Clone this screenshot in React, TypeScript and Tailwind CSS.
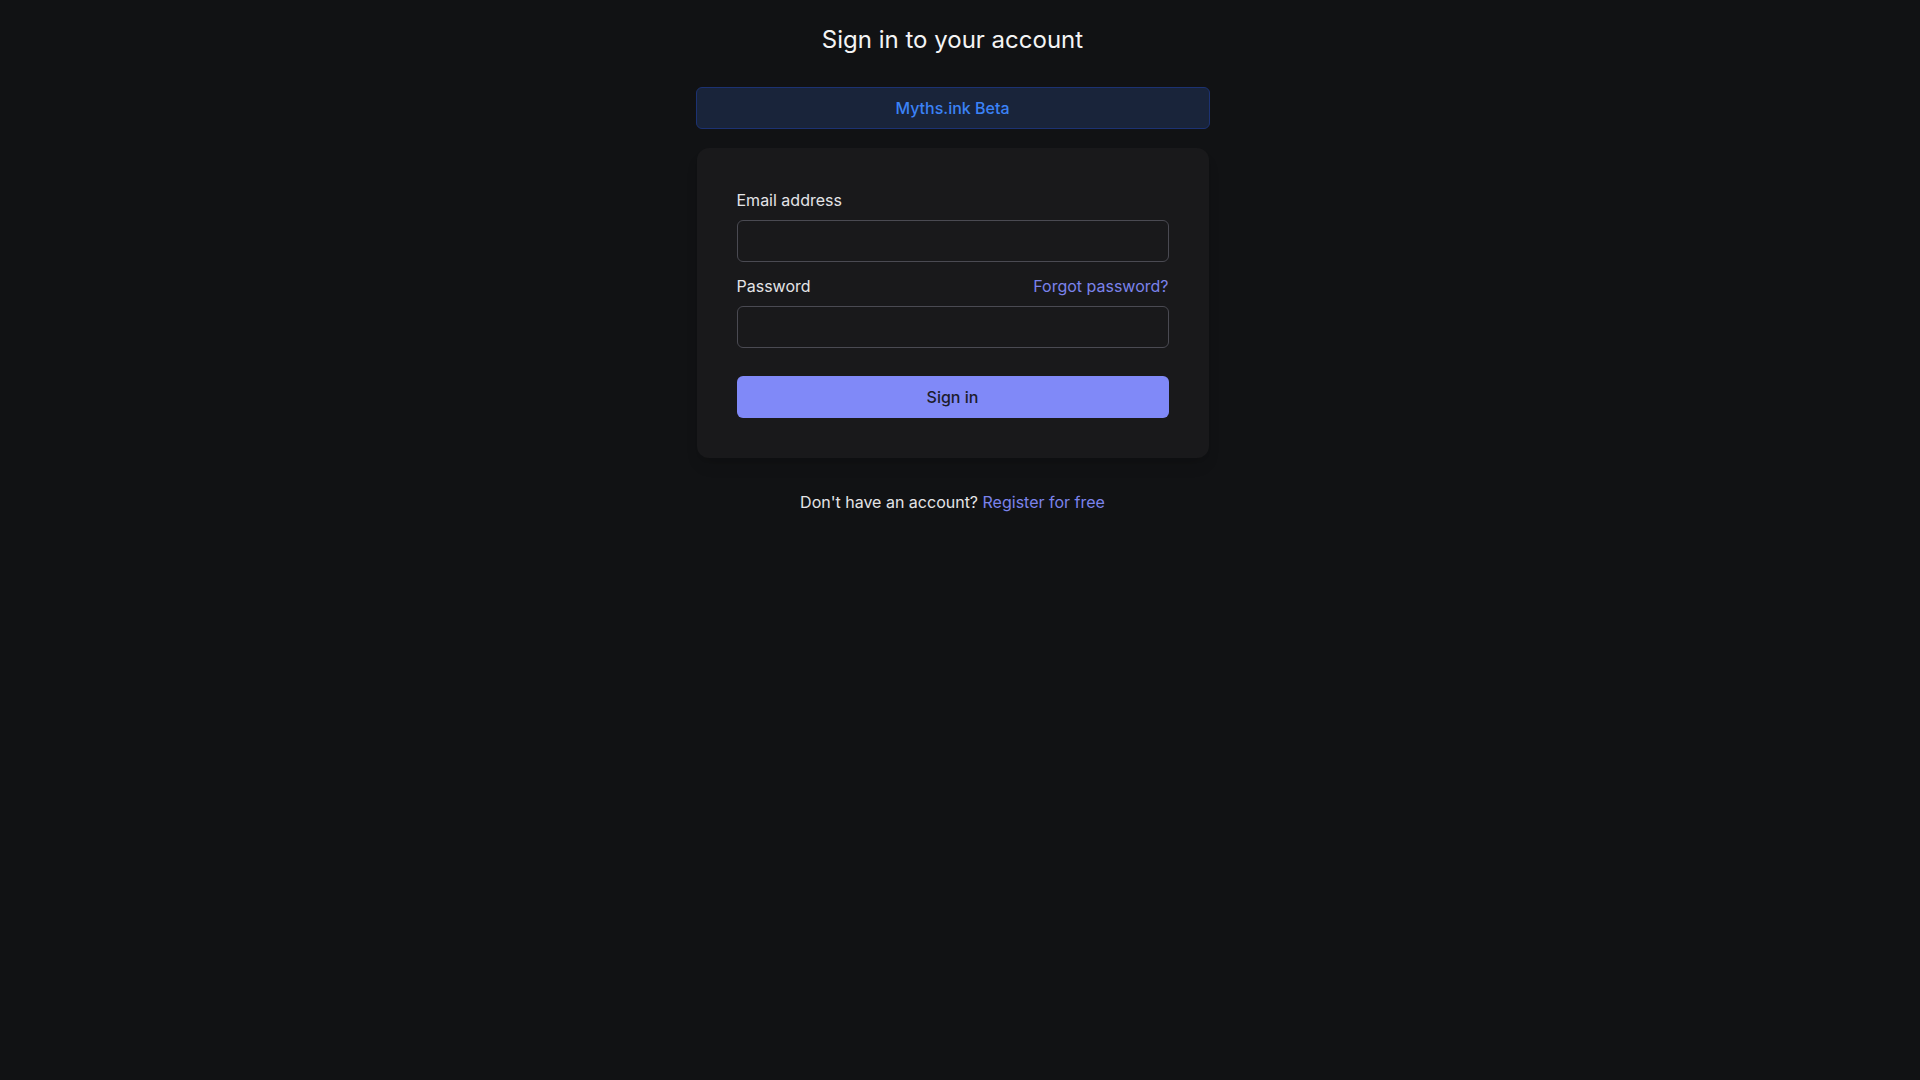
import React from "react";

const App = () => {
  return (
    <div className="min-h-screen w-full bg-[#111214] font-['Inter',sans-serif] text-base text-[#e4e4e7]">
      <div className="mr-[15px] flex flex-col items-center pt-6">
        <h2 className="text-2xl leading-8 font-normal text-[#f4f4f5]">Sign in to your account</h2>

        <div className="mt-[31px] w-[514px] rounded-md border border-[#1c3272] bg-[#19243a] py-2 text-center font-medium text-[#3b82f6]">
          Myths.ink Beta
        </div>

        <div className="mt-[19px] w-[512px] rounded-xl bg-[#19191b] px-10 py-10 shadow-lg">
          <form className="flex flex-col">
            <label className="text-[#e4e4e7]">Email address</label>
            <input
              type="email"
              className="mt-2 h-[42px] w-full rounded-md border border-[#4a4a52] bg-[#19191b] px-3 text-[#e4e4e7] outline-none"
            />

            <div className="mt-3 flex items-center justify-between">
              <label className="text-[#e4e4e7]">Password</label>
              <a href="#" className="text-[#7b83eb]">
                Forgot password?
              </a>
            </div>
            <input
              type="password"
              className="mt-2 h-[42px] w-full rounded-md border border-[#4a4a52] bg-[#19191b] px-3 text-[#e4e4e7] outline-none"
            />

            <button
              type="button"
              className="mt-7 h-[42px] w-full rounded-md bg-[#8089f8] font-medium text-[#1c1c2b]"
            >
              Sign in
            </button>
          </form>
        </div>

        <p className="mt-8 text-[#e4e4e7]">
          Don't have an account?{" "}
          <a href="#" className="text-[#7b83eb]">
            Register for free
          </a>
        </p>
      </div>
    </div>
  );
};

export default App;
